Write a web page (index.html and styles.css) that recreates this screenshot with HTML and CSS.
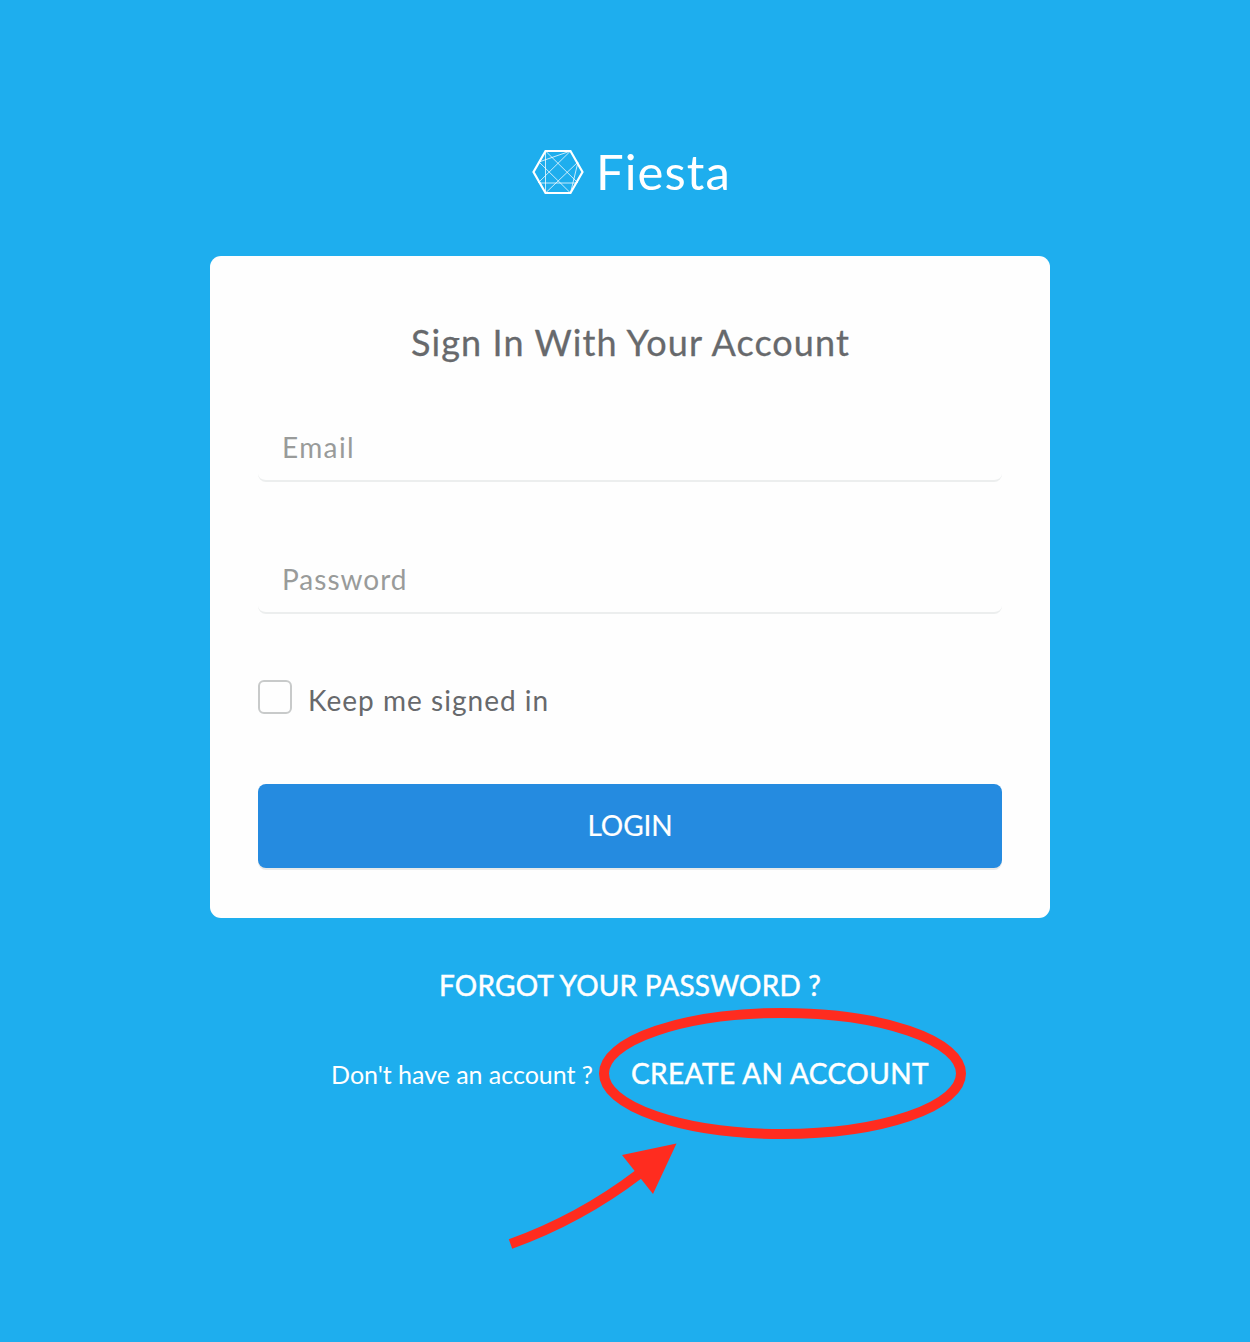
FILE: index.html
```html
<!DOCTYPE html>
<html lang="en">
<head>
<meta charset="utf-8">
<title>Fiesta - Sign In</title>
<link rel="stylesheet" href="styles.css">
</head>
<body>
<main class="page">
  <div class="brand">
    <svg class="brand-mark" width="52" height="46" viewBox="0 0 52 46" fill="none" stroke="#fff">
      <path d="M13.500 2H38.500L50.500 23L38.500 44H13.500L1.500 23Z" stroke-width="2.200"/>
      <path d="M13.500 2V44M13.500 2L46 34M38.500 2L6 34M7 13L38.500 44M46 13L13.500 44M7 13L38.500 2M46 13L38.500 44M7 34H45" stroke-width="1" opacity=".75"/>
    </svg>
    <span class="brand-name">Fiesta</span>
  </div>
  <form class="card">
    <h1 class="title">Sign In With Your Account</h1>
    <input class="field field-email" type="email" placeholder="Email" aria-label="Email">
    <input class="field" type="password" placeholder="Password" aria-label="Password">
    <label class="remember"><span class="checkbox"></span><span class="remember-text">Keep me signed in</span></label>
    <button class="login" type="button">LOGIN</button>
  </form>
  <a class="forgot">FORGOT YOUR PASSWORD ?</a>
  <div class="signup">
    <span class="signup-text">Don't have an account ?</span>
    <a class="create">CREATE AN ACCOUNT</a>
  </div>
  <svg class="annotation" width="380" height="260" viewBox="595 1000 380 260" fill="none" stroke="#ff2c1f">
    <ellipse cx="782.5" cy="1073.5" rx="178.5" ry="60.5" stroke-width="10"/>
    <path d="M510.500 1244Q580 1219 639 1174" stroke-width="10"/>
    <path d="M676.500 1143.500L622 1155L653 1194Z" fill="#ff2c1f" stroke="none"/>
  </svg>
</main>
</body>
</html>
```
FILE: styles.css
```css
* { box-sizing: border-box; }
body { margin: 0; background: #1eaeee; font-family: Lato, sans-serif; color: #fff; }
.page { position: relative; height: 1342px; padding: 148px 0 0 10px; display: flex; flex-direction: column; align-items: center; overflow: hidden; }
.brand { display: flex; gap: 12px; height: 48px; align-items: center; margin-bottom: 60px; padding-left: 3px; }
.brand-name { font-size: 49px; line-height: 47px; height: 48px; letter-spacing: 1.1px; }
.card { width: 840px; height: 662px; padding: 64px 48px 50px; border-radius: 11px; background: #fefefe; color: #67696c; }
.title { margin: 0 0 52px; padding-left: 1px; font-size: 36px; line-height: 45px; height: 44px; font-weight: 400; text-align: center; letter-spacing: 1.1px; -webkit-text-stroke: .3px; }
.field { display: block; width: 100%; height: 66px; margin: 0 0 66px; padding: 0 24px 2px; font: 28px Lato, sans-serif; letter-spacing: 1px; background: transparent; border: 0; border-bottom: 2px solid #eceeee; border-radius: 8px; outline: 0; }
.field-email { letter-spacing: 1.4px; }
.field::placeholder { color: #999b9a; opacity: 1; }
.remember { display: flex; gap: 16px; height: 34px; align-items: center; font-size: 28px; margin-bottom: 70px; letter-spacing: 1.02px; }
.remember-text { padding-top: 5px; }
.checkbox { width: 34px; height: 34px; border: 2px solid #c8caca; border-radius: 6px; }
.login { display: block; width: 100%; height: 84px; border: 0; border-radius: 8px; background: #258be0; color: #fff; font: 28px/82px Lato, sans-serif; letter-spacing: -.1px; padding: 0 0 2px; box-shadow: 0 2px 0 #e8eaea; -webkit-text-stroke: .2px; }
.forgot { margin-top: 47px; font-size: 28px; line-height: 40px; letter-spacing: .2px; -webkit-text-stroke: .5px; }
.signup { display: flex; gap: 38px; align-items: baseline; margin-top: 48px; line-height: 40px; }
.signup-text { font-size: 25px; letter-spacing: -.03px; }
.create { font-size: 28px; letter-spacing: .42px; -webkit-text-stroke: .5px; }
.annotation { position: absolute; left: 595px; top: 1000px; overflow: visible; }
```
